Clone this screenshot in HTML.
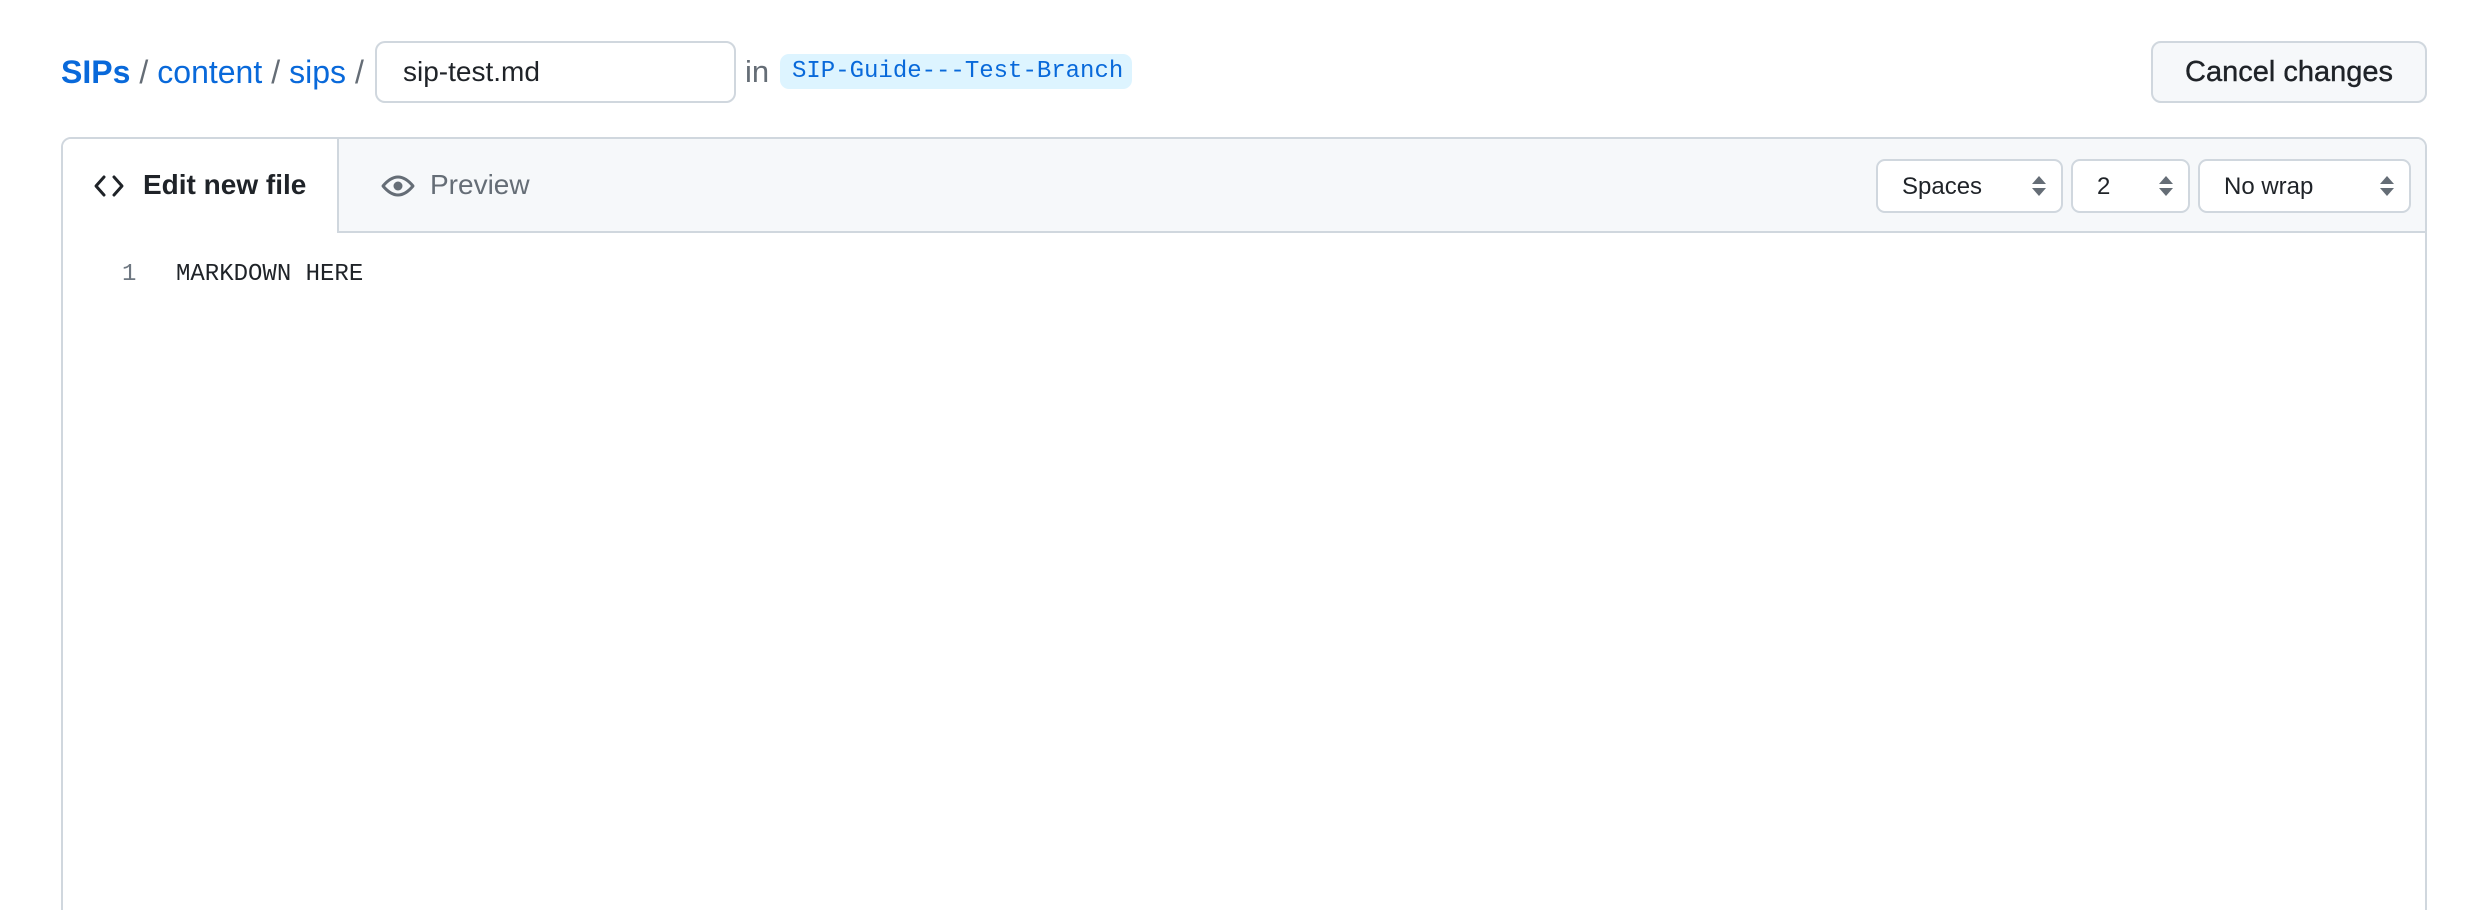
<!DOCTYPE html>
<html style="width:2472px;height:910px;overflow:hidden"><head><meta charset="utf-8"><style>
*{box-sizing:border-box;margin:0;padding:0}
body{width:2472px;height:910px;background:#fff;font-family:"Liberation Sans",sans-serif;color:#1f2328;position:relative;overflow:hidden}
.abs{position:absolute}
.bc{left:61px;top:52px;font-size:32px;line-height:40px;white-space:nowrap}
.bc a{color:#0969da;text-decoration:none}
.bc .sep{color:#656d76;margin:0 9px}
.inp{left:375px;top:41px;width:361px;height:62px;border:2px solid #d0d7de;border-radius:10px;font-size:28px;line-height:58px;padding-left:26px}
.in{left:745px;top:52px;font-size:31px;line-height:40px;color:#656d76}
.pill{left:780px;top:54px;width:352px;height:35px;background:#ddf4ff;border-radius:9px;color:#0969da;font-family:"Liberation Mono",monospace;font-size:24px;line-height:35px;padding-left:12px}
.btn{left:2151px;top:41px;width:276px;height:62px;border:2px solid #d0d7de;border-radius:10px;background:#f6f8fa;font-size:29px;line-height:58px;text-align:center;-webkit-text-stroke:0.4px #1f2328}
.box{left:61px;top:137px;width:2366px;height:800px;border:2px solid #d0d7de;border-radius:10px;overflow:hidden}
.hdr{position:absolute;left:0;top:0;right:0;height:94px;background:#f6f8fa;border-bottom:2px solid #d0d7de}
.tab{position:absolute;left:0;top:0;width:276px;height:94px;background:#fff;border-right:2px solid #d0d7de}
.sel{position:absolute;top:20px;height:54px;border:2px solid #d0d7de;border-radius:9px;background:#fff;font-size:24px;line-height:52px;padding-left:24px}
.arr{position:absolute;right:14px;top:14px}
</style></head><body>
<div class="abs bc"><a href="#" style="font-weight:bold">SIPs</a><span class="sep">/</span><a href="#">content</a><span class="sep">/</span><a href="#">sips</a><span class="sep">/</span></div>
<div class="abs inp">sip-test.md</div>
<div class="abs in">in</div>
<div class="abs pill">SIP-Guide---Test-Branch</div>
<div class="abs btn">Cancel changes</div>
<div class="abs box">
 <div class="hdr">
  <div class="tab">
   <svg class="abs" style="left:30px;top:34px" width="32" height="26" viewBox="0 0 32 26"><path d="M11 4 L3 13 L11 22 M21 4 L29 13 L21 22" fill="none" stroke="#1f2328" stroke-width="3" stroke-linecap="round" stroke-linejoin="round"/></svg>
   <div class="abs" style="left:80px;top:29px;font-size:28px;font-weight:bold;line-height:34px">Edit new file</div>
  </div>
  <svg class="abs" style="left:318px;top:33px" width="34" height="28" viewBox="0 0 34 28"><path d="M2 14 Q17 -4 32 14 Q17 32 2 14 Z" fill="none" stroke="#656d76" stroke-width="3" stroke-linejoin="round"/><circle cx="17" cy="14" r="4.5" fill="#656d76"/></svg>
  <div class="abs" style="left:367px;top:29px;font-size:28px;line-height:34px;color:#656d76">Preview</div>
  <div class="sel" style="left:1813px;width:187px">Spaces<svg class="arr" width="16" height="22" viewBox="0 0 16 22"><path d="M8 1 L15 9 H1 Z M8 21 L15 13 H1 Z" fill="#656d76"/></svg></div>
  <div class="sel" style="left:2008px;width:119px">2<svg class="arr" width="16" height="22" viewBox="0 0 16 22"><path d="M8 1 L15 9 H1 Z M8 21 L15 13 H1 Z" fill="#656d76"/></svg></div>
  <div class="sel" style="left:2135px;width:213px">No wrap<svg class="arr" width="16" height="22" viewBox="0 0 16 22"><path d="M8 1 L15 9 H1 Z M8 21 L15 13 H1 Z" fill="#656d76"/></svg></div>
 </div>
 <div class="abs" style="left:59px;top:122px;font-family:'Liberation Mono',monospace;font-size:24px;line-height:28px;color:#6e7781">1</div>
 <div class="abs" style="left:113px;top:122px;font-family:'Liberation Mono',monospace;font-size:24px;line-height:28px;color:#1f2328">MARKDOWN HERE</div>
</div>
</body></html>
